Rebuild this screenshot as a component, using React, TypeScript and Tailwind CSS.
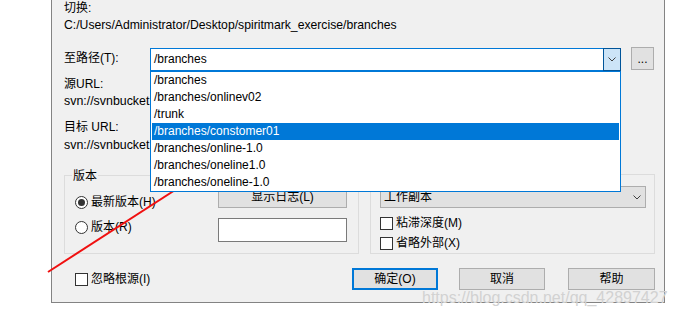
const paths = [
  "/branches",
  "/branches/onlinev02",
  "/trunk",
  "/branches/constomer01",
  "/branches/online-1.0",
  "/branches/oneline1.0",
  "/branches/oneline-1.0",
];

function Chevron() {
  return (
    <svg width="8" height="5" viewBox="0 0 8 5">
      <polyline points="0.5,0.5 4,4 7.5,0.5" fill="none" stroke="#404040" strokeWidth="1" />
    </svg>
  );
}

function Radio({ checked }: { checked?: boolean }) {
  return (
    <div className="w-[13px] h-[13px] rounded-full border border-[#333] bg-white flex items-center justify-center">
      {checked && <div className="w-[7px] h-[7px] rounded-full bg-[#333]" />}
    </div>
  );
}

function Check() {
  return <div className="w-[13px] h-[13px] border border-[#333] bg-white" />;
}

export default function App() {
  return (
    <div className="relative w-[674px] h-[320px] overflow-hidden bg-white text-[12px] leading-[16px] text-black font-['Liberation_Sans','Noto_Sans_CJK_SC',sans-serif]">
      <div className="relative ml-[51px] w-[614px] h-[303px] border-x border-b border-[#838383] bg-[#f0f0f0] pl-[12px] pr-[9px]">
        <div className="h-[16px]">切换:</div>
        <div className="mt-[1px] h-[16px] whitespace-nowrap text-[12.2px]">
          C:/Users/Administrator/Desktop/spiritmark_exercise/branches
        </div>

        {/* 至路径 */}
        <div className="mt-[15px] flex items-start">
          <div className="w-[86px] pt-[2px]">至路径(T):</div>
          <div className="relative z-10">
            <div className="flex w-[471px] h-[23px] border border-[#0078d7] bg-white">
              <div className="flex-1 pl-[3px] leading-[21px]">/branches</div>
              <div className="w-[18px] h-[23px] -mt-[1px] -mr-[1px] border border-[#005499] bg-[#cce4f7] flex items-center justify-center">
                <Chevron />
              </div>
            </div>
            <div className="absolute left-0 top-[23px] w-[471px] h-[121px] border border-[#0078d7] bg-white px-[1px]">
              {paths.map((p, i) => (
                <div
                  key={p}
                  className={`h-[17px] leading-[17px] pl-[2px] whitespace-nowrap ${
                    i === 3 ? "bg-[#0078d7] text-white" : ""
                  }`}
                >
                  {p}
                </div>
              ))}
            </div>
          </div>
          <button className="ml-[10px] -mt-[1px] w-[23px] h-[23px] border border-[#adadad] bg-[#e1e1e1] leading-[18px] text-[12px]">
            ...
          </button>
        </div>

        <div className="mt-[5px] h-[16px]">源URL:</div>
        <div className="mt-[1px] h-[16px] w-[86px] overflow-hidden whitespace-nowrap text-[12.4px]">svn://svnbucket.com/spiritmark</div>
        <div className="mt-[10px] h-[16px]">目标 URL:</div>
        <div className="mt-[2px] h-[16px] w-[86px] overflow-hidden whitespace-nowrap text-[12.4px]">svn://svnbucket.com/spiritmark</div>

        {/* 版本 */}
        <div className="mt-[21px] flex items-start gap-[11px]">
          <div className="relative mt-[1px] w-[295px] h-[79px] border border-[#dcdcdc] flex justify-between pl-[10px] pr-[11px]">
            <div className="absolute left-[7px] -top-[8px] px-[1px] bg-[#f0f0f0]">版本</div>
            <div className="pt-[18px] flex flex-col gap-[9px]">
              <div className="flex items-center gap-[3px] h-[16px]">
                <Radio checked />
                <span>最新版本(H)</span>
              </div>
              <div className="flex items-center gap-[3px] h-[16px]">
                <Radio />
                <span>版本(R)</span>
              </div>
            </div>
            <div className="pt-[11px] flex flex-col gap-[10px]">
              <button className="w-[129px] h-[21px] border border-[#adadad] bg-[#e1e1e1] leading-[19px]">
                显示日志(L)
              </button>
              <div className="w-[129px] h-[24px] border border-[#7a7a7a] bg-white" />
            </div>
          </div>
          <div className="w-[285px] h-[80px] border border-[#dcdcdc] pl-[9px] pt-[11px]">
            <div className="flex items-center w-[266px] h-[22px] border border-[#adadad] bg-[#e1e1e1] pl-[3px] pr-[4px]">
              <span className="flex-1">工作副本</span>
              <Chevron />
            </div>
            <div className="mt-[7px] flex items-center gap-[3px] h-[16px]">
              <Check />
              <span>粘滞深度(M)</span>
            </div>
            <div className="mt-[4px] flex items-center gap-[3px] h-[16px]">
              <Check />
              <span>省略外部(X)</span>
            </div>
          </div>
        </div>

        {/* bottom */}
        <div className="mt-[14px] flex items-center">
          <div className="ml-[11px] flex items-center gap-[3px]">
            <Check />
            <span>忽略根源(I)</span>
          </div>
          <div className="ml-auto flex">
            <button className="w-[86px] h-[22px] border-2 border-[#0078d7] bg-[#e1e1e1]">确定(O)</button>
            <button className="ml-[21px] w-[86px] h-[22px] border border-[#adadad] bg-[#e1e1e1]">取消</button>
            <button className="ml-[23px] w-[87px] h-[22px] border border-[#adadad] bg-[#e1e1e1]">帮助</button>
          </div>
        </div>
      </div>

      <div className="absolute left-[422px] top-[289px] text-[16px] leading-[18px] text-[#d2d2d2] whitespace-nowrap">
        https://blog.csdn.net/qq_42897427
      </div>

      <svg className="absolute inset-0 pointer-events-none" width="674" height="320">
        <line x1="48" y1="272" x2="234" y2="152" stroke="#f01010" strokeWidth="2" />
        <polygon points="241,147 235.6,155.3 231.2,148.5" fill="#f01010" />
      </svg>
    </div>
  );
}
